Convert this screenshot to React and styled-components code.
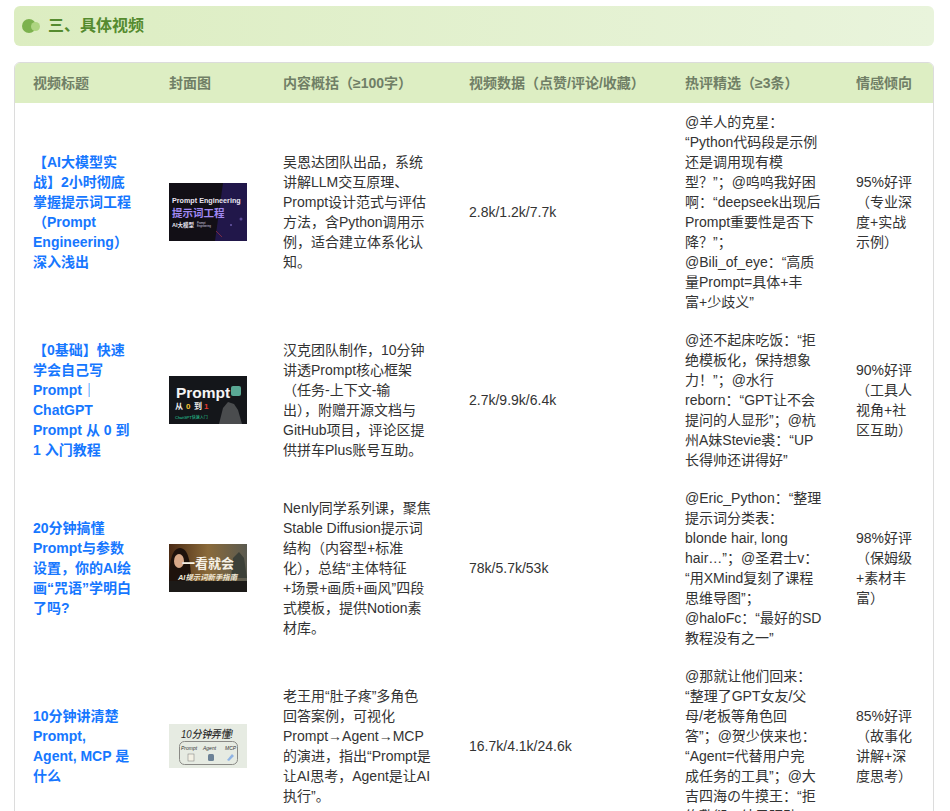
import React from 'react'
import styled, { createGlobalStyle } from 'styled-components'

const GlobalStyle = createGlobalStyle`
  html, body {
    margin: 0;
    padding: 0;
    height: 811px;
    overflow: hidden;
    background: #fff;
  }
  body {
    font-family: "Liberation Sans", "Noto Sans CJK SC", sans-serif;
    font-size: 14px;
    line-height: 20px;
    color: #333;
  }
`

const Page = styled.div`
  width: 920px;
  padding: 6px 16px 0 14px;
`

const Banner = styled.div`
  height: 40px;
  display: flex;
  align-items: center;
  gap: 8px;
  padding-left: 8px;
  border-radius: 6px;
  background: linear-gradient(90deg, #dcedc1 0%, #e9f4dc 100%);
`

const Dots = styled.span`
  position: relative;
  width: 18px;
  height: 14px;
  flex: none;
  &::before {
    content: '';
    position: absolute;
    left: 0;
    top: 0;
    width: 14px;
    height: 14px;
    border-radius: 50%;
    background: #7cb24e;
  }
  &::after {
    content: '';
    position: absolute;
    left: 9px;
    top: 3px;
    width: 9px;
    height: 9px;
    border-radius: 50%;
    background: #aed581;
  }
`

const Heading = styled.h2`
  margin: 0;
  font-size: 16px;
  line-height: 24px;
  font-weight: 700;
  color: #558b2f;
`

const Card = styled.div`
  margin-top: 16px;
  border: 1px solid #dcdcdc;
  border-radius: 6px;
  overflow: hidden;
`

const Table = styled.table`
  width: 918px;
  table-layout: fixed;
  border-collapse: collapse;
`

const Head = styled.th`
  height: 40px;
  padding: 0 18px;
  box-sizing: border-box;
  text-align: left;
  font-weight: 700;
  color: #707f66;
  background: #ddeec3;
  white-space: nowrap;
`

const Cell = styled.td`
  padding: 9px 18px;
  vertical-align: middle;
  word-break: break-word;
  white-space: pre-line;
`

const CommentCell = styled(Cell)`
  padding-right: 4px;
`

const Title = styled.a`
  color: #1677ff;
  font-weight: 700;
  text-decoration: none;
`

const Cover = styled.svg`
  display: block;
  width: 78px;
  height: ${(p) => p.$h}px;
`

const PromptCover = () => (
  <Cover $h={58} viewBox="0 0 78 58">
    <rect width="78" height="58" fill="#120f16" />
    <path d="M54 0h24v58H46z" fill="#21174a" />
    <circle cx="70" cy="20" r="1" fill="#6a5aa8" />
    <circle cx="62" cy="42" r="1" fill="#6a5aa8" />
    <circle cx="72" cy="36" r="1.5" fill="#5a4a98" />
    <path d="M47 48l6 6" stroke="#a03040" strokeWidth="0.7" />
    <text x="3" y="20" fontSize="7.2" fontWeight="700" fill="#e8e4f0">Prompt Engineering</text>
    <text x="3" y="34" fontSize="10.5" fontWeight="700" fill="#a088f2">提示词工程</text>
    <text x="3" y="44" fontSize="5.5" fontWeight="700" fill="#e8e4f0">AI大模型</text>
    <text x="28" y="41" fontSize="2.6" fill="#d8d4e0">Prompt</text>
    <text x="28" y="44" fontSize="2.6" fill="#d8d4e0">Engineering</text>
  </Cover>
)

const ZeroCover = () => (
  <Cover $h={48} viewBox="0 0 78 48">
    <rect width="78" height="48" fill="#14161a" />
    <path d="M50 48l4-16 5-6 6 2 4 6 4 14z" fill="#4a4c4e" />
    <text x="7" y="22" fontSize="15.5" fontWeight="700" fill="#f4f4f4">Prompt</text>
    <rect x="62" y="10" width="10" height="10" rx="2" fill="#5aa894" />
    <text x="6" y="33" fontSize="8" fontWeight="700" fill="#f0f0f0">从</text>
    <text x="17" y="33" fontSize="8" fontWeight="700" fill="#f7c531">0</text>
    <text x="25" y="33" fontSize="8" fontWeight="700" fill="#f0f0f0">到</text>
    <text x="35" y="33" fontSize="8" fontWeight="700" fill="#e63a2e">1</text>
    <text x="6" y="42.5" fontSize="4" fill="#28d7a0">ChatGPT快速入门</text>
  </Cover>
)

const PaintCover = () => (
  <Cover $h={48} viewBox="0 0 78 48">
    <defs>
      <linearGradient id="paintBg" x1="0" y1="0" x2="1" y2="0">
        <stop offset="0" stopColor="#4a2a14" />
        <stop offset="0.5" stopColor="#8a6a3a" />
        <stop offset="1" stopColor="#5a5a50" />
      </linearGradient>
    </defs>
    <rect width="78" height="48" fill="url(#paintBg)" />
    <path d="M0 38c0-20 3-34 11-34s11 14 11 34z" fill="#1e120c" />
    <ellipse cx="10" cy="17" rx="5" ry="7" fill="#d8a888" />
    <path d="M62 34l2-20 6-6 5 6 3 20z" fill="#3c4038" />
    <rect y="37" width="78" height="11" fill="#1c1a18" />
    <text x="13" y="24" fontSize="13" fontWeight="700" fill="#f6f1e6">一看就会</text>
    <text x="9" y="36" fontSize="7.4" fontWeight="700" fontStyle="italic" fill="#f2ead8">AI提示词新手指南</text>
  </Cover>
)

const AgentCover = () => (
  <Cover $h={44} viewBox="0 0 78 44">
    <rect width="78" height="44" fill="#e6ebe2" />
    <text x="12" y="14" fontSize="11" fontStyle="italic" fontWeight="500" fill="#2a2a2a" textLength="52" lengthAdjust="spacingAndGlyphs">10分钟弄懂!</text>
    <rect x="10.5" y="17.5" width="58" height="23" rx="5" fill="none" stroke="#8a8a86" />
    <text x="12" y="26" fontSize="5" fontStyle="italic" fill="#333">Prompt</text>
    <text x="34" y="26" fontSize="5" fontStyle="italic" fill="#333">Agent</text>
    <text x="56" y="26" fontSize="5" fontStyle="italic" fill="#333">MCP</text>
    <rect x="19" y="30" width="6" height="7" fill="#f3f1e4" stroke="#777" strokeWidth="0.5" />
    <rect x="39" y="30" width="6" height="7" rx="1.5" fill="#6c8296" />
    <path d="M58 36l5-6 2 2-5 5z" fill="#8fb4e4" />
  </Cover>
)

const rows = [
  {
    title: '【AI大模型实战】2小时彻底掌握提示词工程（Prompt Engineering）深入浅出',
    cover: <PromptCover />,
    summary: '吴恩达团队出品，系统讲解LLM交互原理、Prompt设计范式与评估方法，含Python调用示例，适合建立体系化认知。',
    stats: '2.8k/1.2k/7.7k',
    comments: '@羊人的克星：\n“Python代码段是示例\n还是调用现有模\n型？”；@呜呜我好困\n啊：“deepseek出现后\nPrompt重要性是否下\n降？”；\n@Bili_of_eye：“高质\n量Prompt=具体+丰\n富+少歧义”',
    mood: '95%好评（专业深度+实战示例）',
  },
  {
    title: '【0基础】快速学会自己写 Prompt｜ChatGPT Prompt 从 0 到 1 入门教程',
    cover: <ZeroCover />,
    summary: '汉克团队制作，10分钟讲透Prompt核心框架（任务-上下文-输\n出），附赠开源文档与GitHub项目，评论区提供拼车Plus账号互助。',
    stats: '2.7k/9.9k/6.4k',
    comments: '@还不起床吃饭：“拒\n绝模板化，保持想象\n力！”；@水行\nreborn：“GPT让不会\n提问的人显形”；@杭\n州A妹Stevie裘：“UP\n长得帅还讲得好”',
    mood: '90%好评（工具人视角+社区互助）',
  },
  {
    title: '20分钟搞懂Prompt与参数设置，你的AI绘画“咒语”学明白了吗?',
    cover: <PaintCover />,
    summary: 'Nenly同学系列课，聚焦Stable Diffusion提示词结构（内容型+标准化），总结“主体特征\n+场景+画质+画风”四段式模板，提供Notion素材库。',
    stats: '78k/5.7k/53k',
    comments: '@Eric_Python：“整理\n提示词分类表：\nblonde hair, long\nhair…”；@圣君士v：\n“用XMind复刻了课程\n思维导图”；\n@haloFc：“最好的SD\n教程没有之一”',
    mood: '98%好评（保姆级+素材丰富）',
  },
  {
    title: '10分钟讲清楚 Prompt,\nAgent, MCP 是什么',
    cover: <AgentCover />,
    summary: '老王用“肚子疼”多角色\n回答案例，可视化Prompt→Agent→MCP的演进，指出“Prompt是让AI思考，Agent是让AI执行”。',
    stats: '16.7k/4.1k/24.6k',
    comments: '@那就让他们回来：\n“整理了GPT女友/父\n母/老板等角色回\n答”；@贺少侠来也：\n“Agent=代替用户完\n成任务的工具”；@大\n吉四海の牛摸王：“拒\n绝敷衍，结果驱动”',
    mood: '85%好评（故事化讲解+深度思考）',
  },
]

const App = () => (
  <Page>
    <GlobalStyle />
    <Banner>
      <Dots />
      <Heading>三、具体视频</Heading>
    </Banner>
    <Card>
      <Table>
        <colgroup>
          <col width="136" />
          <col width="114" />
          <col width="186" />
          <col width="216" />
          <col width="171" />
          <col width="95" />
        </colgroup>
        <thead>
          <tr>
            <Head>视频标题</Head>
            <Head>封面图</Head>
            <Head>内容概括（≥100字）</Head>
            <Head>视频数据（点赞/评论/收藏）</Head>
            <Head>热评精选（≥3条）</Head>
            <Head>情感倾向</Head>
          </tr>
        </thead>
        <tbody>
          {rows.map((row) => (
            <tr key={row.stats}>
              <Cell><Title href="#">{row.title}</Title></Cell>
              <Cell>{row.cover}</Cell>
              <Cell>{row.summary}</Cell>
              <Cell>{row.stats}</Cell>
              <CommentCell>{row.comments}</CommentCell>
              <Cell>{row.mood}</Cell>
            </tr>
          ))}
        </tbody>
      </Table>
    </Card>
  </Page>
)

export default App
